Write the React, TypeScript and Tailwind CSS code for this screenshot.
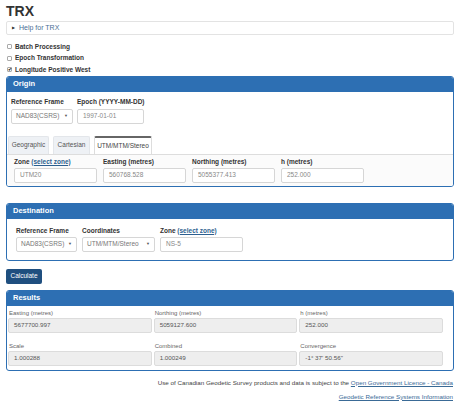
import React from 'react';

const Label = ({ children, mb = 'mb-[3px]' }: { children: React.ReactNode; mb?: string }) => (
  <div className={`text-[6.5px] font-bold leading-[9px] text-[#333] ${mb}`}>{children}</div>
);

const Select = ({ value, w }: { value: string; w: string }) => (
  <div className={`${w} h-[15px] border border-[#d6d6d6] rounded-[2px] bg-white flex items-center justify-between px-[4px] text-[6.5px] text-[#777]`}>
    <span>{value}</span>
    <span className="text-[4px] text-[#555]">▼</span>
  </div>
);

const Input = ({ value, w }: { value: string; w: string }) => (
  <div className={`${w} h-[15px] border border-[#d6d6d6] rounded-[2px] bg-white flex items-center px-[5px] text-[6.5px] text-[#888]`}>
    {value}
  </div>
);

const Panel = ({ title, children }: { title: string; children: React.ReactNode }) => (
  <div className="border border-[#2d6fb3] rounded-[3px] overflow-hidden">
    <div className="h-[15px] bg-[#2d6fb3] text-white text-[7.5px] font-bold flex items-center px-[6px]">{title}</div>
    {children}
  </div>
);

const Check = ({ label, checked }: { label: string; checked?: boolean }) => (
  <div className="flex items-center gap-[2px] h-[11.5px] text-[6.5px] font-bold text-[#333]">
    <span className="w-[5px] h-[5px] border border-[#aaa] rounded-[1px] bg-white flex items-center justify-center text-[5px] leading-none text-[#333]">
      {checked ? '✔' : ''}
    </span>
    <span className="ml-[1px]">{label}</span>
  </div>
);

const ReadField = ({ label, value }: { label: string; value: string }) => (
  <div>
    <div className="text-[6px] text-[#666] leading-[8px] mb-[1px] pl-[1px]">{label}</div>
    <div className="h-[15px] bg-[#eeeeee] border border-[#dcdcdc] rounded-[2px] flex items-center px-[5px] text-[6.25px] text-[#555]">
      {value}
    </div>
  </div>
);

export default function App() {
  return (
    <div className="w-[460px] h-[405px] bg-white px-[6px] font-['Liberation_Sans',Arial,sans-serif] text-[#333] overflow-hidden">
      <h1 className="text-[14px] font-bold leading-[16px] pt-[3px] h-[21px]">TRX</h1>

      <div className="h-[14px] border border-[#e3e3e3] rounded-[2px] flex items-center pl-[5px] text-[7px] text-[#4a6f96]">
        <span className="text-[4px] mr-[4px] text-[#333]">▶</span>
        Help for TRX
      </div>

      <div className="pt-[6px] pl-[1px]">
        <Check label="Batch Processing" />
        <Check label="Epoch Transformation" />
        <Check label="Longitude Positive West" checked />
      </div>

      <Panel title="Origin">
        <div className="px-[4px] pt-[5px] flex gap-[4px]">
          <div>
            <Label>Reference Frame</Label>
            <Select value="NAD83(CSRS)" w="w-[62px]" />
          </div>
          <div>
            <Label>Epoch (YYYY-MM-DD)</Label>
            <Input value="1997-01-01" w="w-[67px]" />
          </div>
        </div>

        <div className="mt-[12px] flex gap-[4px] pl-[1px] h-[18px]">
          <div className="w-[41px] bg-[#eef1f5] border border-[#e3e6ea] border-b-0 rounded-t-[2px] flex items-center justify-center text-[6.5px] text-[#555]">Geographic</div>
          <div className="w-[37px] bg-[#eef1f5] border border-[#e3e6ea] border-b-0 rounded-t-[2px] flex items-center justify-center text-[6.5px] text-[#555]">Cartesian</div>
          <div className="w-[58px] bg-white border border-[#ddd] border-t-[2px] border-t-[#666] border-b-0 rounded-t-[2px] flex items-center justify-center text-[6.5px] text-[#444]">UTM/MTM/Stereo</div>
        </div>
        <div className="border-t border-[#ddd] bg-[#fbfbfb] px-[7px] pt-[2px] pb-[3px] flex gap-[6px]">
          <div>
            <Label mb="mb-[2px]">
              Zone <span className="underline text-[#2d5f8f]">(select zone)</span>
            </Label>
            <Input value="UTM20" w="w-[83px]" />
          </div>
          <div>
            <Label mb="mb-[2px]">Easting (metres)</Label>
            <Input value="560768.528" w="w-[83px]" />
          </div>
          <div>
            <Label mb="mb-[2px]">Northing (metres)</Label>
            <Input value="5055377.413" w="w-[83px]" />
          </div>
          <div>
            <Label mb="mb-[2px]">h (metres)</Label>
            <Input value="252.000" w="w-[83px]" />
          </div>
        </div>
      </Panel>

      <div className="mt-[16px]">
        <Panel title="Destination">
          <div className="px-[9px] pt-[7px] pb-[8px] flex gap-[5px]">
            <div>
              <Label mb="mb-[2px]">Reference Frame</Label>
              <Select value="NAD83(CSRS)" w="w-[61px]" />
            </div>
            <div>
              <Label mb="mb-[2px]">Coordinates</Label>
              <Select value="UTM/MTM/Stereo" w="w-[73px]" />
            </div>
            <div>
              <Label mb="mb-[2px]">
                Zone <span className="underline text-[#2d5f8f]">(select zone)</span>
              </Label>
              <Input value="NS-5" w="w-[83px]" />
            </div>
          </div>
        </Panel>
      </div>

      <button className="mt-[8px] h-[15px] w-[36px] bg-[#1f4f7f] text-white text-[6.5px] rounded-[2px] flex items-center justify-center">
        Calculate
      </button>

      <div className="mt-[6px]">
        <Panel title="Results">
          <div className="w-[437px] px-[1px] pt-[3px] pb-[4px] grid grid-cols-3 gap-x-[2px] gap-y-[9px]">
            <ReadField label="Easting (metres)" value="5677700.997" />
            <ReadField label="Northing (metres)" value="5059127.600" />
            <ReadField label="h (metres)" value="252.000" />
            <ReadField label="Scale" value="1.000288" />
            <ReadField label="Combined" value="1.000249" />
            <ReadField label="Convergence" value={'-1° 37\' 50.56"'} />
          </div>
        </Panel>
      </div>

      <div className="mt-[5px] text-right text-[6.25px] text-[#444] leading-[14px] pr-[1px]">
        <div>
          Use of Canadian Geodetic Survey products and data is subject to the{' '}
          <span className="underline text-[#3a6a96]">Open Government Licence - Canada</span>
        </div>
        <div>
          <span className="underline text-[#3a6a96]">Geodetic Reference Systems Information</span>
        </div>
      </div>
    </div>
  );
}
